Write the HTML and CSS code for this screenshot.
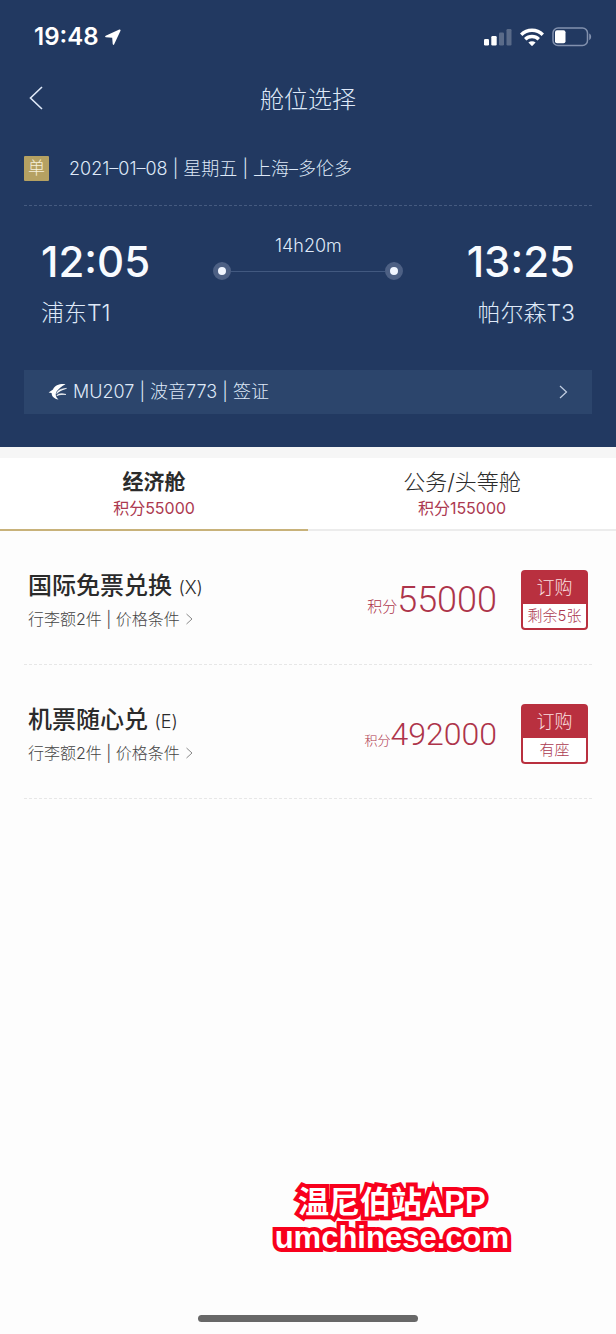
FILE: index.html
```
<!DOCTYPE html>
<html lang="zh-CN">
<head>
<meta charset="utf-8">
<meta name="viewport" content="width=device-width, initial-scale=1">
<title>舱位选择</title>
<link rel="stylesheet" href="styles.css">
</head>
<body>
<div class="screen">
  <header class="hero">
    <div class="status">
      <div class="status-left">
        <span class="clock">19:48</span>
        <svg class="locate" width="16" height="16" viewBox="0 0 16 16" aria-hidden="true"><path d="M14.300.6.700 6.700c-.9.5-.8 1.400.2 1.500l6.300.6.500 6.300c.1 1 1.100 1.100 1.500.2L15.500 1.700c.3-.8-.4-1.400-1.200-1.100z" fill="currentColor"/></svg>
      </div>
      <div class="status-right">
        <svg width="28" height="18" viewBox="0 0 28 18" aria-hidden="true"><g fill="#fff"><rect x="0" y="11" width="5" height="6.500" rx="1.200"/><rect x="7.300" y="8" width="5.400" height="9.500" rx="1.200"/><g opacity=".25"><rect x="15" y="4.500" width="5" height="13" rx="1.200"/><rect x="22.500" y="1" width="5" height="16.500" rx="1.200"/></g></g></svg>
        <svg width="24" height="18" viewBox="0 0 24 18" aria-hidden="true"><g fill="none" stroke="#fff" stroke-width="3.400"><path d="M1.200 6.700a15.500 15.500 0 0 1 21.600 0"/><path d="M5.200 11.200a9.800 9.800 0 0 1 13.600 0"/></g><path d="M12 18.200 8.400 14.600a5.200 5.200 0 0 1 7.200 0z" fill="#fff"/></svg>
        <svg width="40" height="20" viewBox="0 0 40 20" aria-hidden="true"><rect x="1" y="1" width="34.500" height="17.500" rx="5" fill="none" stroke="#8291ae" stroke-width="1.500"/><rect x="3" y="3.200" width="10.500" height="13" rx="2" fill="#fff"/><path d="M37.200 6.500c2.600 1 2.600 5.500 0 6.500z" fill="#8291ae"/></svg>
      </div>
    </div>

    <div class="nav">
      <button class="back" type="button" aria-label="返回"><svg width="14" height="24" viewBox="0 0 14 24" aria-hidden="true"><path d="M13 1 1.500 12 13 23" fill="none" stroke="currentColor" stroke-width="1.600"/></svg></button>
      <h1 class="title">舱位选择</h1>
    </div>

    <div class="route">
      <span class="badge">单</span>
      <span class="route-text">2021–01–08 | 星期五 | 上海–多伦多</span>
    </div>

    <div class="trip">
      <div class="stop">
        <div class="time">12:05</div>
        <div class="airport">浦东T1</div>
      </div>
      <div class="span">
        <div class="duration">14h20m</div>
        <div class="line"><i class="dot"></i><i class="bar"></i><i class="dot"></i></div>
      </div>
      <div class="stop stop-end">
        <div class="time">13:25</div>
        <div class="airport">帕尔森T3</div>
      </div>
    </div>

    <button class="flight" type="button">
      <svg width="20" height="18" viewBox="0 0 20 18" aria-hidden="true"><path d="M17.500 1.200C11.500.7 7 2.200 5 6.500L.6 9.600l3 .4c.1 3.500 2.600 5.900 6.900 6.500-3-2.400-3.600-5.800-1.500-8.500C11 5.400 13.500 3.400 17.500 1.200z" fill="#fff"/><path d="M18.500 5.400C13 5.700 9.300 7.400 8.700 10.600 11.200 7.900 14.500 6.500 18.500 5.400zM18 11.500c-4.300-1.500-7.800-1-9.300 1.200 2.700-1.200 5.700-1.500 9.300-1.200z" fill="#fff" stroke="#fff" stroke-width=".6"/></svg>
      <span>MU207 | 波音773 | 签证</span>
      <svg class="flight-arrow" width="9" height="14" viewBox="0 0 9 14" aria-hidden="true"><path d="m1 1 6.500 6L1 13" fill="none" stroke="#c3cfe2" stroke-width="1.200"/></svg>
    </button>
  </header>

  <nav class="tabs">
    <button class="tab tab-active" type="button"><span class="tab-name">经济舱</span><span class="tab-points">积分55000</span></button>
    <button class="tab" type="button"><span class="tab-name">公务/头等舱</span><span class="tab-points">积分155000</span></button>
  </nav>

  <main class="fares">
    <article class="fare">
      <div class="fare-info">
        <h2 class="fare-name">国际免票兑换 <span class="fare-class">(X)</span></h2>
        <a class="fare-terms" href="#">行李额2件 | 价格条件<svg width="7" height="12" viewBox="0 0 7 12" aria-hidden="true"><path d="m.5 1 5.500 5-5.500 5" fill="none" stroke="#888" stroke-width="1"/></svg></a>
      </div>
      <div class="price"><span class="unit">积分</span><span class="amount">55000</span></div>
      <button class="buy" type="button"><span class="buy-top">订购</span><span class="buy-left">剩余5张</span></button>
    </article>
    <article class="fare">
      <div class="fare-info">
        <h2 class="fare-name">机票随心兑 <span class="fare-class">(E)</span></h2>
        <a class="fare-terms" href="#">行李额2件 | 价格条件<svg width="7" height="12" viewBox="0 0 7 12" aria-hidden="true"><path d="m.5 1 5.500 5-5.500 5" fill="none" stroke="#888" stroke-width="1"/></svg></a>
      </div>
      <div class="price price-long"><span class="unit">积分</span><span class="amount">492000</span></div>
      <button class="buy" type="button"><span class="buy-top">订购</span><span class="buy-left">有座</span></button>
    </article>
  </main>

  <footer class="foot">
    <div class="mark">
      <div class="mark-top">温尼伯站APP</div>
      <div class="mark-site">umchinese.com</div>
    </div>
    <div class="home"></div>
  </footer>
</div>
</body>
</html>
```
FILE: styles.css
```
* { box-sizing: border-box; }

body {
  margin: 0;
  background: #fdfdfd;
  color: #2b2b2b;
  font-family: Inter, "Noto Sans CJK SC", sans-serif;
  font-weight: 300;
}

button {
  margin: 0;
  padding: 0;
  border: 0;
  background: none;
  color: inherit;
  font: inherit;
}

svg { display: block; flex: none; }

.screen {
  display: flex;
  flex-direction: column;
  min-height: 100vh;
}

.hero {
  padding: 20px 24px 33px;
  background: #223961;
  color: #dfe9f8;
}

.status {
  display: flex;
  align-items: center;
  justify-content: space-between;
  height: 34px;
  padding-left: 10px;
  color: #fff;
}

.status-left { display: flex; align-items: center; gap: 6px; }
.clock { font-size: 24px; line-height: 32px; font-weight: 600; }
.status-right { display: flex; align-items: center; gap: 8px; }

.nav {
  display: grid;
  grid-template-columns: 40px 1fr 40px;
  align-items: center;
  height: 88px;
}

.back { padding: 10px 5px; }
.title {
  margin: 0;
  padding-top: 4px;
  font-size: 24px;
  line-height: 36px;
  font-weight: 300;
  text-align: center;
}

.route {
  display: flex;
  align-items: center;
  gap: 20px;
  height: 64px;
  padding-bottom: 10px;
  border-bottom: 1px dashed #465b80;
  font-size: 18px;
  line-height: 26px;
}

.badge {
  width: 25px;
  border-radius: 1px;
  background: #b5a162;
  color: #f6efd8;
  font-size: 17px;
  line-height: 25px;
  text-align: center;
}

.trip {
  display: flex;
  justify-content: space-between;
  padding: 28px 17px 0;
}

.stop-end { text-align: right; }
.time {
  color: #f8fbff;
  font-size: 42px;
  line-height: 56px;
  font-weight: 500;
}
.airport { margin-top: 6px; font-size: 23px; line-height: 34px; }

.span { width: 190px; }
.duration { font-size: 18px; line-height: 24px; text-align: center; }
.line { display: flex; align-items: center; margin-top: 4px; }
.dot {
  width: 18px;
  height: 18px;
  border: 5px solid #4d6084;
  border-radius: 50%;
  background: #f1f6ff;
}
.bar { flex: 1; height: 1px; background: #425980; }

.flight {
  display: flex;
  align-items: center;
  gap: 5px;
  width: 100%;
  height: 44px;
  margin-top: 40px;
  padding: 0 24px;
  background: #2c456c;
  font-size: 18px;
  line-height: 26px;
}
.flight-arrow { margin-left: auto; }

.tabs {
  display: grid;
  grid-template-columns: 1fr 1fr;
  border-top: 11px solid #f6f6f6;
  background: #fff;
}
.tab {
  display: flex;
  flex-direction: column;
  align-items: center;
  height: 73px;
  padding-top: 9px;
  border-bottom: 2px solid #ececec;
}
.tab-active { border-bottom-color: #c8b27a; }
.tab-name { font-size: 22px; line-height: 30px; }
.tab-active .tab-name { font-size: 21px; font-weight: 700; }
.tab-points { color: #ac3950; font-size: 16px; line-height: 22px; font-weight: 400; }

.fares { padding: 0 24px; }
.fare {
  display: flex;
  align-items: flex-start;
  height: 134px;
  padding: 39px 4px 0;
  border-bottom: 1px dashed #e7e7e7;
}
.fare-info { flex: 1; }
.fare-name {
  margin: 0;
  font-size: 24px;
  line-height: 32px;
  font-weight: 500;
}
.fare-class { font-size: 18px; font-weight: 300; }
.fare-terms {
  display: flex;
  align-items: center;
  gap: 6px;
  margin-top: 2px;
  color: #444;
  font-size: 16px;
  line-height: 26px;
  text-decoration: none;
}
.price {
  margin-right: 24px;
  padding-top: 6px;
  color: #ad344a;
  line-height: 48px;
  white-space: nowrap;
}
.unit { font-size: 15px; }
.amount { font-family: Roboto, sans-serif; font-size: 36px; }
.price-long .unit { font-size: 13px; }
.price-long .amount { font-size: 32px; }

.buy {
  width: 67px;
  border: 2px solid #b9303f;
  border-radius: 4px;
  background: #fff;
}
.buy-top {
  display: block;
  background: #b9303f;
  color: #fbe0e2;
  font-size: 18px;
  line-height: 32px;
}
.buy-left { display: block; color: #ac3950; font-size: 15px; line-height: 24px; }

.foot {
  display: flex;
  flex-direction: column;
  align-items: center;
  margin-top: auto;
  padding-bottom: 12px;
}
.mark {
  align-self: flex-end;
  margin-right: 107px;
  color: #fff;
  font-family: "Liberation Sans", "Noto Sans CJK SC", sans-serif;
  font-weight: 700;
  text-align: center;
  -webkit-text-stroke: 8px #f8001c;
  paint-order: stroke fill;
  stroke-linejoin: round;
}
.mark-top { font-size: 31px; line-height: 36px; }
.mark-site { font-size: 31px; line-height: 34px; }
.home {
  width: 220px;
  height: 7px;
  margin-top: 60px;
  border-radius: 4px;
  background: #686868;
}
```
